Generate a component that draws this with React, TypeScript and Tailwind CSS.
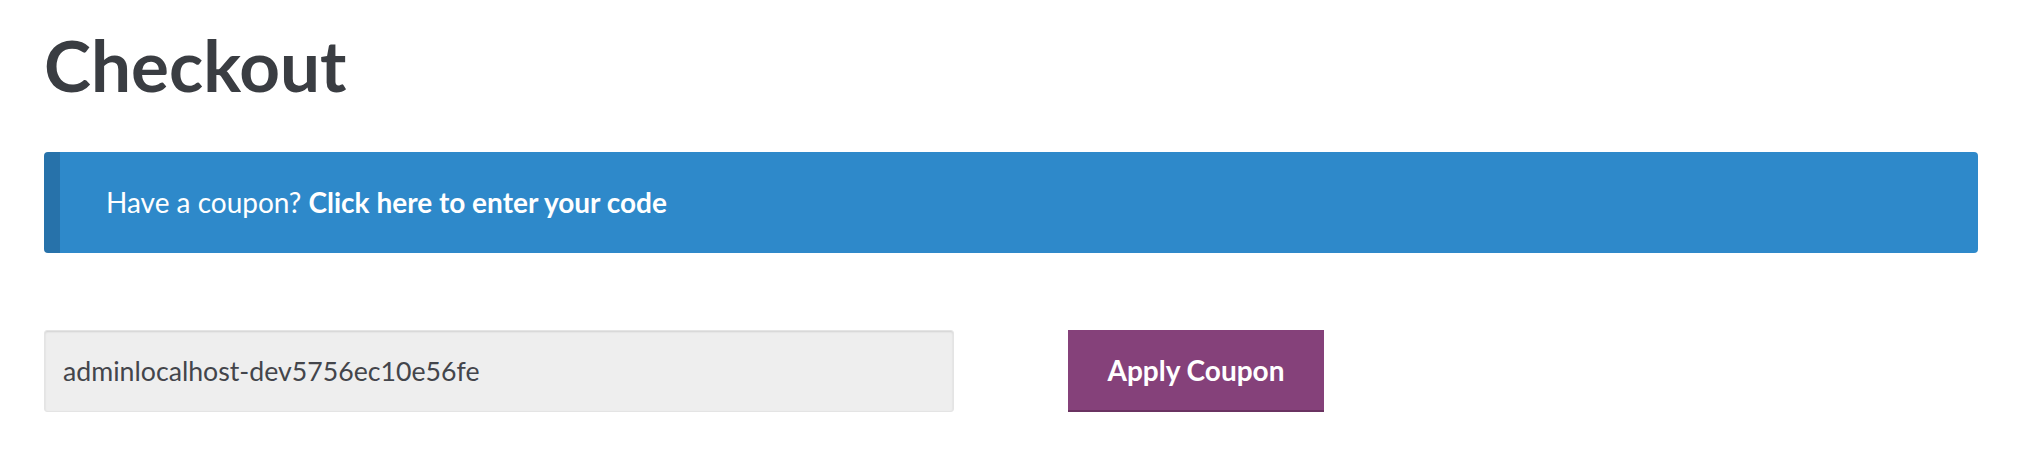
import React from "react";

export default function App() {
  return (
    <div
      className="w-[2044px] h-[458px] bg-white pl-[44px] pr-[66px] pt-[29px]"
      style={{ fontFamily: "Lato, 'Liberation Sans', sans-serif" }}
    >
      <h1 className="text-[71px] leading-none font-bold text-[#3a3d42] h-[73px]">
        Checkout
      </h1>
      <div className="mt-[50px] h-[101px] flex items-center bg-[#2e89ca] border-l-[16px] border-[#2772aa] rounded-[4px] pl-[46px] pb-[2px] text-white text-[28px]">
        <span>
          Have a coupon? <span className="font-bold">Click here to enter your code</span>
        </span>
      </div>
      <div className="mt-[77px] flex items-stretch h-[82px]">
        <div className="w-[910px] h-[82px] bg-[#eeeeee] rounded-[3px] border border-[#e4e4e4] shadow-[inset_0_1px_2px_rgba(0,0,0,0.12)] flex items-center pl-[18px] text-[26.7px] text-[#43454b]">
          adminlocalhost-dev5756ec10e56fe
        </div>
        <button className="ml-[114px] w-[256px] h-[82px] bg-[#85417a] border-b-[2px] border-[#6a3361] text-white font-bold text-[28px] flex items-center justify-center">
          Apply Coupon
        </button>
      </div>
    </div>
  );
}
